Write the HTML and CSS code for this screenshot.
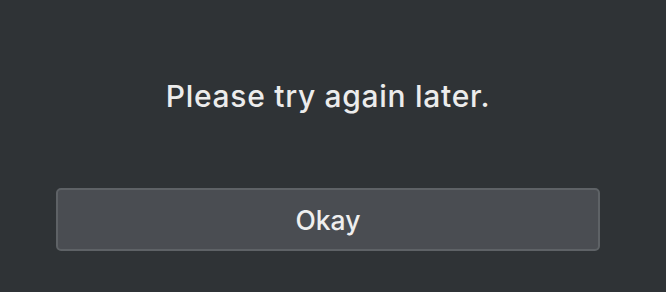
FILE: index.html
```html
<!DOCTYPE html>
<html>
<head>
<meta charset="utf-8">
<link rel="stylesheet" href="styles.css">
</head>
<body>
<div class="dialog">
  <p class="message">Please try again later.</p>
  <button class="okay">Okay</button>
</div>
</body>
</html>
```

FILE: styles.css
```css
html, body {
  margin: 0;
  padding: 0;
  background: #2f3336;
  width: 666px;
  height: 292px;
  overflow: hidden;
}
.dialog {
  display: flex;
  flex-direction: column;
  align-items: center;
  padding: 77px 66px 0 56px;
  font-family: Inter, "Liberation Sans", sans-serif;
}
.message {
  margin: 0;
  color: #ececec;
  font-size: 30px;
  font-weight: 500;
  letter-spacing: 0.7px;
  line-height: 38px;
}
.okay {
  margin-top: 73px;
  width: 544px;
  height: 63px;
  box-sizing: border-box;
  background: #4a4d52;
  border: 2px solid #5e6266;
  border-radius: 5px;
  color: #efefef;
  font-family: Inter, "Liberation Sans", sans-serif;
  font-size: 26.5px;
  font-weight: 500;
  padding: 0;
}
```
